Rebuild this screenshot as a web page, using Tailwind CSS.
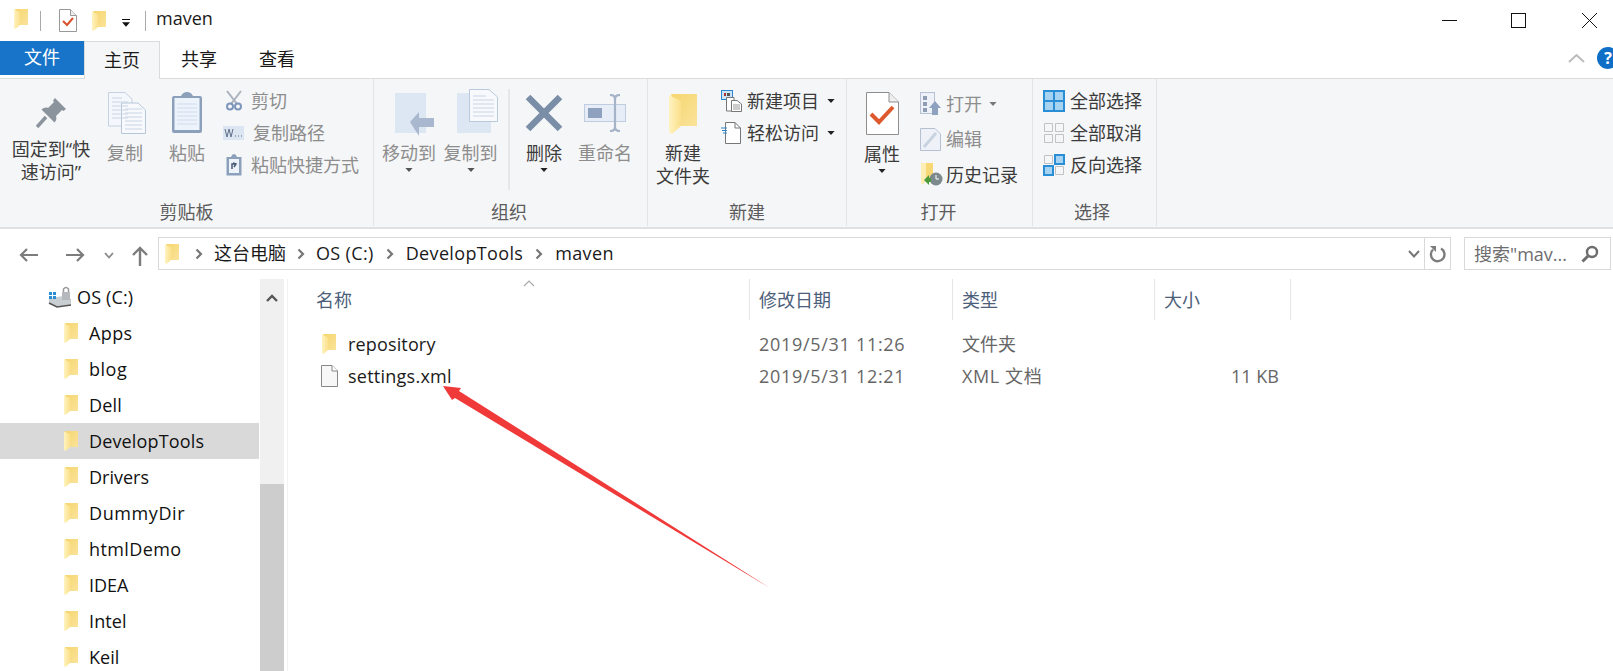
<!DOCTYPE html>
<html lang="zh">
<head>
<meta charset="utf-8">
<script src="https://cdn.jsdelivr.net/npm/@tailwindcss/browser@4"></script>
</head>
<body class="bg-white">
<svg width="0" height="0" class="absolute">
  <defs>
    <linearGradient id="fg" x1="0" x2="1" y1="0" y2="0"><stop offset="0" stop-color="#fff3c0"/><stop offset="1" stop-color="#fbe08c"/></linearGradient>
    <linearGradient id="bk" x1="0" x2="1" y1="0" y2="1"><stop offset="0" stop-color="#f6d66f"/><stop offset="1" stop-color="#fae39a"/></linearGradient>
    <symbol id="folder" viewBox="0 0 14 20"><path d="M1 0H14V16H6Z" fill="url(#bk)"/><path d="M0 0.5L6 3.5V16L1.5 20L0 19Z" fill="url(#fg)"/></symbol>
    <symbol id="caret" viewBox="0 0 9 5"><path d="M0 0H9L4.5 5Z" fill="currentColor"/></symbol>
    <symbol id="chev" viewBox="0 0 8 12"><path d="M1.5 1.5L6 6L1.5 10.5" fill="none" stroke="#777" stroke-width="2.2"/></symbol>
  </defs>
</svg>
<div class="relative w-[1613px] h-[671px] overflow-hidden bg-white text-[18px] leading-none text-[#1a1a1a]" style="font-family:'Open Sans','Noto Sans CJK SC',sans-serif">

  <!-- title bar -->
  <header class="flex h-[41px] items-center">
    <svg class="ml-[14px] w-[14px] h-[20px] mb-[4px]"><use href="#folder"/></svg>
    <div class="ml-[12px] w-px h-[20px] bg-[#aaa]"></div>
    <svg class="ml-[18px] w-[18px] h-[23px]" viewBox="0 0 18 23"><path d="M.5.5H11.500L17.500 6.500V22.500H.5Z" fill="#fff" stroke="#999"/><path d="M11.500.5V6.500H17.500" fill="#eee" stroke="#999"/><path d="M4 12L8 16L14 9" fill="none" stroke="#d9512c" stroke-width="2"/></svg>
    <svg class="ml-[15px] w-[14px] h-[20px]"><use href="#folder"/></svg>
    <div class="ml-[16px] mt-[5px] flex flex-col items-center gap-[2px]"><div class="w-[8px] h-[1.500px] bg-[#111]"></div><svg class="w-[8px] h-[5px] text-[#111]"><use href="#caret"/></svg></div>
    <div class="ml-[15px] w-px h-[20px] bg-[#aaa]"></div>
    <span class="ml-[10px] mb-[6px]">maven</span>
    <div class="ml-auto flex items-center">
      <div class="w-[15px] h-px bg-[#111]"></div>
      <div class="ml-[54px] w-[15px] h-[15px] border border-[#111]"></div>
      <svg class="ml-[56px] mr-[16px] w-[15px] h-[15px]" viewBox="0 0 15 15"><path d="M0 0L15 15M15 0L0 15" stroke="#111"/></svg>
    </div>
  </header>

  <!-- tabs -->
  <nav class="relative flex h-[38px] border-b border-[#dadbdc]">
    <div class="w-[84px] h-[34px] bg-[#1874c8] text-white flex items-center justify-center pb-[2px]">文件</div>
    <div class="relative z-10 w-[76px] h-[38px] bg-[#f5f6f7] border-x border-t border-[#dadbdc] flex items-center justify-center pb-[2px]">主页</div>
    <div class="w-[78px] h-[37px] flex items-center justify-center pb-[2px]">共享</div>
    <div class="w-[78px] h-[37px] flex items-center justify-center pb-[2px]">查看</div>
    <div class="ml-auto flex items-center">
      <svg class="w-[17px] h-[10px] mb-[3px]" viewBox="0 0 17 10"><path d="M1 9L8.500 2L16 9" fill="none" stroke="#bbb" stroke-width="2"/></svg>
      <div class="ml-[12px] -mr-[6px] w-[22px] h-[22px] rounded-full bg-[#0f6fc6] text-white text-[16px] font-bold flex items-center justify-center mb-[3px]">?</div>
    </div>
  </nav>

  <!-- ribbon -->
  <section class="flex h-[150px] bg-[#f5f6f7] border-b-2 border-[#e0e1e2] text-[#8d8d8d]">
    <!-- clipboard -->
    <div class="w-[374px] h-[147px] flex flex-col border-r border-[#e3e4e5]">
      <div class="flex h-[116px]">
        <div class="ml-[10px] w-[82px] flex flex-col items-center text-[#3b3b3b]">
          <svg class="mt-[18px] w-[31px] h-[31px]" viewBox="0 0 31 31"><path d="M19 1L30 12L27.500 14L26 13L20 19C21 22 20 24 18.500 25.500L5.500 12.500C7.500 11 10 10 12 11L18 5L17 3.500Z" fill="#8b949c"/><path d="M10 20L1 30" stroke="#8b949c" stroke-width="3.500"/></svg>
          <span class="mt-[12px]">固定到“快</span><span class="mt-[5px]">速访问”</span>
        </div>
        <div class="ml-[9px] w-[48px] flex flex-col items-center">
          <svg class="ml-[3px] mt-[13px] w-[38px] h-[42px]" viewBox="0 0 38 42"><path d="M.5.500H17L24 7V34H.5Z" fill="#f4f7fb" stroke="#c5d1e0"/><path d="M13.500 11H30L37.500 18V41.500H13.500Z" fill="#f7f9fc" stroke="#b7c6da"/><path d="M4 6H14M4 10H20M4 14H20M4 18H20M4 22H20M4 26H20M17 17H34M17 21H34M17 25H34M17 29H34M17 33H34M17 37H34" stroke="#c9d5e4"/></svg>
          <span class="mt-[10px]">复制</span>
        </div>
        <div class="ml-[14px] w-[48px] flex flex-col items-center">
          <svg class="mt-[12px] w-[32px] h-[43px]" viewBox="0 0 32 43"><path d="M1 7Q1 5 3 5H10Q12 1 16 1T22 5H29Q31 5 31 7V40Q31 42 29 42H3Q1 42 1 40Z" fill="#8ca0bc"/><rect x="3.500" y="7" width="25" height="32" fill="#edf3fb"/><path d="M6 13H26M6 17H26M6 21H26M6 25H26M6 29H26M6 33H26" stroke="#cfdcec"/></svg>
          <span class="mt-[10px]">粘贴</span>
        </div>
        <div class="ml-[12px] flex flex-col gap-[11px] pt-[11px]">
          <div class="flex items-center h-[21px]"><svg class="ml-[3px] w-[16px] h-[21px]" viewBox="0 0 16 21"><path d="M1 1L11 14M15 1L5 14" stroke="#a9b2bd" stroke-width="2"/><circle cx="4" cy="16.500" r="3" fill="none" stroke="#7e95bb" stroke-width="2"/><circle cx="12" cy="16.500" r="3" fill="none" stroke="#7e95bb" stroke-width="2"/></svg><span class="ml-[9px]">剪切</span></div>
          <div class="flex items-center h-[21px]"><svg class="w-[21px] h-[14px]" viewBox="0 0 21 14"><rect width="21" height="14" fill="#dce6f3"/><path d="M2 3L4 11L6 3L8 11L10 3M12 10H13M15 10H16M18 10H19" fill="none" stroke="#5f6f88"/></svg><span class="ml-[9px]">复制路径</span></div>
          <div class="flex items-center h-[21px]"><svg class="ml-[3px] w-[16px] h-[22px]" viewBox="0 0 16 22"><path d="M.5 3H5Q6 0 8 0T11 3H15.500V21.500H.5Z" fill="#8ca0bc"/><rect x="3" y="5" width="10" height="14" fill="#edf3fb"/><path d="M6 15V10H10M7 9L10 10L8 13" fill="none" stroke="#4a5a75" stroke-width="1.500"/></svg><span class="ml-[9px]">粘贴快捷方式</span></div>
        </div>
      </div>
      <div class="pt-[8px] text-center text-[#5c5c5c]">剪贴板</div>
    </div>
    <!-- organize -->
    <div class="w-[274px] h-[147px] flex flex-col border-r border-[#e3e4e5]">
      <div class="flex h-[116px]">
        <div class="ml-[8px] w-[54px] flex flex-col items-center">
          <svg class="ml-[12px] mt-[13px] w-[40px] h-[45px] shrink-0" viewBox="0 0 40 45"><rect x="0" y="1" width="31" height="40" fill="#dde6f3"/><path d="M15 30L24 20V26H39V35H24V44Z" fill="#a9b8cf"/></svg>
          <span class="-mt-[3px] pt-[10px]">移动到</span>
          <svg class="mt-[6px] w-[8px] h-[4px] text-[#555]"><use href="#caret"/></svg>
        </div>
        <div class="ml-[7px] w-[55px] flex flex-col items-center">
          <svg class="ml-[13px] mt-[10px] w-[41px] h-[45px]" viewBox="0 0 41 45"><rect x="0" y="4" width="34" height="40" fill="#dde6f3"/><path d="M12.500.5H32L40.500 8V32.500H12.500Z" fill="#f7f9fc" stroke="#bac8db"/><path d="M16 7H29M16 11H37M16 15H37M16 19H37M16 23H37M16 27H37" stroke="#c9d5e4"/></svg>
          <span class="mt-[10px]">复制到</span>
          <svg class="mt-[6px] w-[8px] h-[4px] text-[#555]"><use href="#caret"/></svg>
        </div>
        <div class="ml-[10px] mt-[10px] w-[2px] h-[101px] bg-[#e6e7e8]"></div>
        <div class="ml-[15px] w-[38px] flex flex-col items-center text-[#3b3b3b]">
          <svg class="mt-[15px] w-[38px] h-[38px]" viewBox="0 0 38 38"><path d="M3 3L35 35M35 3L3 35" stroke="#7b8ea8" stroke-width="6.500"/></svg>
          <span class="mt-[12px] whitespace-nowrap">删除</span>
          <svg class="mt-[6px] w-[8px] h-[4px] text-[#222]"><use href="#caret"/></svg>
        </div>
        <div class="ml-[15px] w-[54px] flex flex-col items-center">
          <svg class="mt-[15px] w-[42px] h-[38px]" viewBox="0 0 42 38"><rect x=".5" y="10.500" width="41" height="17" fill="#e6edf6" stroke="#c0cde0"/><rect x="4" y="14" width="14" height="10" fill="#8ea2bf"/><path d="M26 1Q31 1 31 5V33Q31 37 36 37M36 1Q31 1 31 5M31 33Q31 37 26 37" fill="none" stroke="#a4b3c8" stroke-width="2.200"/></svg>
          <span class="mt-[12px]">重命名</span>
        </div>
      </div>
      <div class="pt-[8px] text-center text-[#5c5c5c] pr-[3px]">组织</div>
    </div>
    <!-- new -->
    <div class="w-[199px] h-[147px] flex flex-col border-r border-[#e3e4e5]">
      <div class="flex h-[116px]">
        <div class="ml-[7px] w-[56px] flex flex-col items-center text-[#3b3b3b]">
          <svg class="mt-[14px] w-[28px] h-[42px]"><use href="#folder"/></svg>
          <span class="mt-[9px]">新建</span><span class="mt-[5px]">文件夹</span>
        </div>
        <div class="ml-[10px] flex flex-col gap-[11px] pt-[11px] text-[#3b3b3b]">
          <div class="flex items-center h-[21px]"><svg class="w-[21px] h-[22px]" viewBox="0 0 21 22"><rect x=".5" y=".5" width="11" height="9" fill="#cde4f7" stroke="#2a86d0"/><rect x="3" y="3" width="2" height="3" fill="#a33"/><rect x="6" y="3" width="3" height="3" fill="#555"/><path d="M5.500 7.500H13V21H5.500Z" fill="#fff" stroke="#777"/><path d="M10.500 10.500H16L20.500 14V21.500H10.500Z" fill="#fff" stroke="#777"/><path d="M12 15H19M12 17H19M12 19H19" stroke="#999"/></svg><span class="ml-[5px]">新建项目</span><svg class="ml-[8px] w-[8px] h-[4px] text-[#222]"><use href="#caret"/></svg></div>
          <div class="flex items-center h-[21px]"><svg class="w-[20px] h-[22px]" viewBox="0 0 20 22"><path d="M4.500.5H14L19.500 6V21.500H4.500Z" fill="#fff" stroke="#777"/><path d="M14 .5V6H19.500" fill="none" stroke="#777"/><path d="M0 6H6M1 8.500H6M2 11H6" stroke="#2a86d0"/></svg><span class="ml-[6px]">轻松访问</span><svg class="ml-[8px] w-[8px] h-[4px] text-[#222]"><use href="#caret"/></svg></div>
        </div>
      </div>
      <div class="pt-[8px] text-center text-[#5c5c5c]">新建</div>
    </div>
    <!-- open -->
    <div class="w-[186px] h-[147px] flex flex-col border-r border-[#e3e4e5]">
      <div class="flex h-[116px]">
        <div class="ml-[16px] w-[38px] flex flex-col items-center text-[#3b3b3b]">
          <svg class="mt-[13px] w-[33px] h-[43px]" viewBox="0 0 33 43"><path d="M.5.500H23L32.500 10V42.500H.5Z" fill="#fff" stroke="#8e8e8e"/><path d="M23 .5V10H32.500" fill="#eee" stroke="#8e8e8e"/><path d="M5 22L13 30L27 15" fill="none" stroke="#de5a2e" stroke-width="4"/></svg>
          <span class="mt-[10px]">属性</span>
          <svg class="mt-[6px] w-[8px] h-[4px] text-[#222]"><use href="#caret"/></svg>
        </div>
        <div class="ml-[19px] flex flex-col gap-[12.500px] pt-[13px]">
          <div class="flex items-center h-[23px]"><svg class="w-[21px] h-[23px]" viewBox="0 0 21 23"><rect x=".5" y=".5" width="14" height="21" fill="#eef2f8" stroke="#b5c1d2"/><path d="M3 4H7V8H3ZM3 10H7V14H3ZM3 16H7V20H3Z" fill="#8e9db3"/><path d="M15 9L21 16H18V23H12V16H9Z" fill="#8ea2bf"/></svg><span class="ml-[5px]">打开</span><svg class="ml-[7px] w-[8px] h-[4px] text-[#777]"><use href="#caret"/></svg></div>
          <div class="flex items-center h-[23px]"><svg class="w-[21px] h-[23px]" viewBox="0 0 21 23"><path d="M.5.500H15L20.500 6V22.500H.5Z" fill="#eef2f8" stroke="#b5c1d2"/><path d="M4 19L16 5" stroke="#c9d3e0" stroke-width="3"/></svg><span class="ml-[5px]">编辑</span></div>
          <div class="flex items-center h-[23px] text-[#3b3b3b]"><svg class="w-[24px] h-[24px]" viewBox="0 0 24 24"><path d="M2 0H13V17H6L3 21L1 20V1Z" fill="#f8d775"/><path d="M1 0H6V16L3 21L1 20Z" fill="#fdeeb4"/><circle cx="16" cy="16" r="6.500" fill="#7c8a8e"/><path d="M16 12V16H19" stroke="#fff" fill="none"/><path d="M4 17L9 12V15H11V19H9V22Z" fill="#4d9a3b"/></svg><span class="ml-[2px]">历史记录</span></div>
        </div>
      </div>
      <div class="pt-[8px] text-center text-[#5c5c5c] pr-[2px]">打开</div>
    </div>
    <!-- select -->
    <div class="w-[124px] h-[147px] flex flex-col border-r border-[#e3e4e5]">
      <div class="flex h-[116px] flex-col gap-[11px] pl-[10px] pt-[11px] text-[#3b3b3b]">
        <div class="flex items-center h-[21px]"><svg class="w-[22px] h-[22px]" viewBox="0 0 22 22"><rect width="22" height="22" fill="#2a8ed6"/><path d="M2 2H10V10H2ZM12 2H20V10H12ZM2 12H10V20H2ZM12 12H20V20H12Z" fill="#a6d3f2"/></svg><span class="ml-[5px]">全部选择</span></div>
        <div class="flex items-center h-[21px]"><svg class="w-[22px] h-[22px]" viewBox="0 0 22 22" fill="none" stroke="#c2c2c2"><path d="M1.500 1.500H9.500V9.500H1.500ZM12.500 1.500H20.500V9.500H12.500ZM1.500 12.500H9.500V20.500H1.500ZM12.500 12.500H20.500V20.500H12.500Z"/></svg><span class="ml-[5px]">全部取消</span></div>
        <div class="flex items-center h-[21px]"><svg class="w-[22px] h-[22px]" viewBox="0 0 22 22"><path d="M1.500 1.500H9.500V9.500H1.500ZM12.500 12.500H20.500V20.500H12.500Z" fill="none" stroke="#c2c2c2"/><path d="M11 0H22V11H11ZM0 11H11V22H0Z" fill="#2a8ed6"/><path d="M13 2H20V9H13ZM2 13H9V20H2Z" fill="#a6d3f2"/></svg><span class="ml-[5px]">反向选择</span></div>
      </div>
      <div class="pt-[8px] text-center text-[#5c5c5c] pr-[5px]">选择</div>
    </div>
  </section>

  <!-- address row -->
  <div class="flex h-[50px] items-start pt-[8px]">
    <svg class="ml-[19px] mt-[10px] w-[20px] h-[16px]" viewBox="0 0 20 16"><path d="M19 8H2M8 2L2 8L8 14" fill="none" stroke="#7c7c7c" stroke-width="2.200"/></svg>
    <svg class="ml-[26px] mt-[10px] w-[20px] h-[16px]" viewBox="0 0 20 16"><path d="M1 8H18M12 2L18 8L12 14" fill="none" stroke="#7c7c7c" stroke-width="2.200"/></svg>
    <svg class="ml-[19px] mt-[15px] w-[10px] h-[7px]" viewBox="0 0 10 7"><path d="M1 1L5 5.500L9 1" fill="none" stroke="#8b8b8b" stroke-width="1.800"/></svg>
    <svg class="ml-[17px] mt-[9px] w-[18px] h-[20px]" viewBox="0 0 18 20"><path d="M9 20V2M2 9L9 2L16 9" fill="none" stroke="#7c7c7c" stroke-width="2.400"/></svg>
    <div class="ml-[9px] w-[1293px] h-[33px] border border-[#d9d9d9] flex items-center tracking-[0.35px]">
      <svg class="ml-[6px] w-[14px] h-[20px]"><use href="#folder"/></svg>
      <svg class="ml-[16px] w-[8px] h-[12px]"><use href="#chev"/></svg>
      <span class="ml-[11px] mb-[1px] tracking-normal">这台电脑</span>
      <svg class="ml-[11px] w-[8px] h-[12px]"><use href="#chev"/></svg>
      <span class="ml-[11px] mb-[1px]">OS (C:)</span>
      <svg class="ml-[12px] w-[8px] h-[12px]"><use href="#chev"/></svg>
      <span class="ml-[12px] mb-[1px]">DevelopTools</span>
      <svg class="ml-[12px] w-[8px] h-[12px]"><use href="#chev"/></svg>
      <span class="ml-[12px] mb-[1px]">maven</span>
      <svg class="ml-auto mr-[4px] w-[12px] h-[8px]" viewBox="0 0 12 8"><path d="M1 1L6 6.500L11 1" fill="none" stroke="#777" stroke-width="2"/></svg>
      <div class="w-[26px] h-full border-l border-[#d9d9d9] flex items-center justify-center">
        <svg class="w-[17px] h-[18px]" viewBox="0 0 17 18"><path d="M4 4.500A6.800 6.800 0 1 0 12 3.500" fill="none" stroke="#7c7c7c" stroke-width="2.400"/><path d="M1 1H7V7Z" fill="#7c7c7c"/></svg>
      </div>
    </div>
    <div class="ml-[13px] w-[147px] h-[33px] border border-[#d9d9d9] flex items-center text-[#6d6d6d]">
      <span class="ml-[9px]">搜索"mav...</span>
      <svg class="ml-auto mr-[11px] w-[18px] h-[18px]" viewBox="0 0 18 18"><circle cx="11" cy="7" r="5" fill="none" stroke="#6d6d6d" stroke-width="2.400"/><path d="M7 11L1.500 16.500" stroke="#6d6d6d" stroke-width="3"/></svg>
    </div>
  </div>

  <!-- main -->
  <main class="flex h-[392px]">
    <aside class="w-[259px] shrink-0 flex flex-col text-[#111]">
      <div class="flex h-[36px] shrink-0 items-center pl-[48px]">
        <svg class="w-[24px] h-[22px]" viewBox="0 0 24 22"><path d="M1 12L16 10L23 13V19L9 21L1 18Z" fill="#c9ced2"/><path d="M1 17L9 21L23 19" fill="none" stroke="#555" stroke-width="1.500"/><path d="M1 6H4V9H1ZM5 6H8V9H5ZM1 10H4V13H1ZM5 10H8V13H5Z" fill="#2a8ed6"/><rect x="14" y="6" width="8" height="8" fill="#b5b9bd"/><path d="M15.500 6V3Q18 0 20.500 3V6" fill="none" stroke="#999" stroke-width="1.500"/></svg>
        <span class="ml-[5px] tracking-[0.15px]">OS (C:)</span>
      </div>
      <div class="flex h-[36px] shrink-0 items-center pl-[64px]"><svg class="w-[14px] h-[20px]"><use href="#folder"/></svg><span class="ml-[11px] tracking-[0.4px]">Apps</span></div>
      <div class="flex h-[36px] shrink-0 items-center pl-[64px]"><svg class="w-[14px] h-[20px]"><use href="#folder"/></svg><span class="ml-[11px] tracking-[0.5px]">blog</span></div>
      <div class="flex h-[36px] shrink-0 items-center pl-[64px]"><svg class="w-[14px] h-[20px]"><use href="#folder"/></svg><span class="ml-[11px] tracking-[0.2px]">Dell</span></div>
      <div class="flex h-[36px] shrink-0 items-center pl-[64px] bg-[#d9d9d9]"><svg class="w-[14px] h-[20px]"><use href="#folder"/></svg><span class="ml-[11px] tracking-[0.15px]">DevelopTools</span></div>
      <div class="flex h-[36px] shrink-0 items-center pl-[64px]"><svg class="w-[14px] h-[20px]"><use href="#folder"/></svg><span class="ml-[11px]">Drivers</span></div>
      <div class="flex h-[36px] shrink-0 items-center pl-[64px]"><svg class="w-[14px] h-[20px]"><use href="#folder"/></svg><span class="ml-[11px] tracking-[0.6px]">DummyDir</span></div>
      <div class="flex h-[36px] shrink-0 items-center pl-[64px]"><svg class="w-[14px] h-[20px]"><use href="#folder"/></svg><span class="ml-[11px] tracking-[0.4px]">htmlDemo</span></div>
      <div class="flex h-[36px] shrink-0 items-center pl-[64px]"><svg class="w-[14px] h-[20px]"><use href="#folder"/></svg><span class="ml-[11px]">IDEA</span></div>
      <div class="flex h-[36px] shrink-0 items-center pl-[64px]"><svg class="w-[14px] h-[20px]"><use href="#folder"/></svg><span class="ml-[11px] tracking-[0.1px]">Intel</span></div>
      <div class="flex h-[36px] shrink-0 items-center pl-[64px]"><svg class="w-[14px] h-[20px]"><use href="#folder"/></svg><span class="ml-[11px]">Keil</span></div>
    </aside>
    <!-- scrollbar -->
    <div class="ml-[1px] w-[24px] shrink-0 flex flex-col bg-[#f0f0f0]">
      <div class="h-[205px] flex justify-center pt-[15px]"><svg class="w-[12px] h-[8px]" viewBox="0 0 12 8"><path d="M1 7L6 2L11 7" fill="none" stroke="#555" stroke-width="2.400"/></svg></div>
      <div class="flex-1 bg-[#cdcdcd]"></div>
    </div>
    <!-- list -->
    <div class="flex-1 ml-[3px] border-l border-[#f2f2f2] pl-[28px] relative">
      <div class="grid grid-cols-[433px_203px_202px_137px] h-[41px] text-[#4c607a]">
        <div class="flex items-center h-full">名称</div>
        <div class="flex items-center h-full pl-[9px] border-l border-[#e5e5e5]">修改日期</div>
        <div class="flex items-center h-full pl-[9px] border-l border-[#e5e5e5]">类型</div>
        <div class="flex items-center h-full pl-[9px] border-x border-[#e5e5e5]">大小</div>
      </div>
      <div class="grid grid-cols-[433px_203px_202px_137px] h-[32px] mt-[8px] items-center text-[#666]">
        <div class="flex items-center text-[#1a1a1a]"><svg class="ml-[6px] w-[14px] h-[20px]"><use href="#folder"/></svg><span class="ml-[12px] tracking-[0.15px]">repository</span></div>
        <div class="pl-[10px] tracking-[0.7px]">2019/5/31 11:26</div>
        <div class="pl-[10px]">文件夹</div>
        <div></div>
      </div>
      <div class="grid grid-cols-[433px_203px_202px_137px] h-[32px] items-center text-[#666]">
        <div class="flex items-center text-[#1a1a1a]"><svg class="ml-[5px] w-[17px] h-[22px]" viewBox="0 0 17 22"><path d="M.5.5H11L16.500 6V21.500H.5Z" fill="#f7f7f7" stroke="#888"/><path d="M11 .5V6H16.500" fill="#fff" stroke="#888"/></svg><span class="ml-[10px] tracking-[0.25px]">settings.xml</span></div>
        <div class="pl-[10px] tracking-[0.7px]">2019/5/31 12:21</div>
        <div class="pl-[10px] tracking-[0.6px]">XML 文档</div>
        <div class="text-right pr-[12px]">11 KB</div>
      </div>
      <svg class="absolute left-[235px] top-[1px] w-[12px] h-[7px]" viewBox="0 0 12 7"><path d="M1 6L6 1L11 6" fill="none" stroke="#aaa" stroke-width="1.200"/></svg>
    </div>
  </main>

  <!-- annotation arrow -->
  <svg class="absolute left-0 top-0 w-[1613px] h-[671px] pointer-events-none" viewBox="0 0 1613 671"><polygon points="443,386 461,388 459,391 770,588 455,398 452,400" fill="#f03a3a"/></svg>
</div>
</body>
</html>
